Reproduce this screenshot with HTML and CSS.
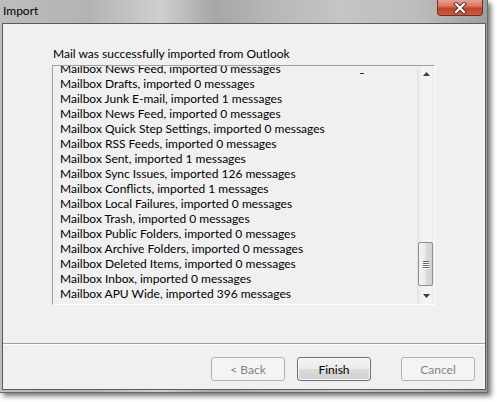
FILE: index.html
```html
<!DOCTYPE html>
<html>
<head>
<meta charset="utf-8">
<link rel="stylesheet" href="styles.css">
</head>
<body>
<div class="window">
  <div class="titlebar">
    <span class="title">Import</span>
    <div class="close">
      <svg width="16" height="12" viewBox="0 0 16 12">
        <path d="M4 2 L12 10 M12 2 L4 10" stroke="#4a3a38" stroke-width="4" stroke-linecap="square"/>
        <path d="M4 2 L12 10 M12 2 L4 10" stroke="#ffffff" stroke-width="2" stroke-linecap="square"/>
      </svg>
    </div>
  </div>
  <div class="client">
    <div class="content">
      <p class="heading">Mail was successfully imported from Outlook</p>
      <div class="listbox">
        <div class="viewport">
          <ul class="items">
            <li>Mailbox News Feed, imported 0 messages</li>
            <li>Mailbox Drafts, imported 0 messages</li>
            <li>Mailbox Junk E-mail, imported 1 messages</li>
            <li>Mailbox News Feed, imported 0 messages</li>
            <li>Mailbox Quick Step Settings, imported 0 messages</li>
            <li>Mailbox RSS Feeds, imported 0 messages</li>
            <li>Mailbox Sent, imported 1 messages</li>
            <li>Mailbox Sync Issues, imported 126 messages</li>
            <li>Mailbox Conflicts, imported 1 messages</li>
            <li>Mailbox Local Failures, imported 0 messages</li>
            <li>Mailbox Trash, imported 0 messages</li>
            <li>Mailbox Public Folders, imported 0 messages</li>
            <li>Mailbox Archive Folders, imported 0 messages</li>
            <li>Mailbox Deleted Items, imported 0 messages</li>
            <li>Mailbox Inbox, imported 0 messages</li>
            <li>Mailbox APU Wide, imported 396 messages</li>
          </ul>
          <span class="dash"></span>
        </div>
        <div class="scrollbar">
          <div class="arrow">
            <svg width="7" height="4" viewBox="0 0 7 4"><path d="M3.5 0 L7 4 L0 4 Z" fill="#3c3c3c"/></svg>
          </div>
          <div class="track">
            <div class="thumb">
              <div class="grip"><i></i><i></i><i></i><i></i></div>
            </div>
          </div>
          <div class="arrow">
            <svg width="7" height="4" viewBox="0 0 7 4"><path d="M0 0 L7 0 L3.5 4 Z" fill="#3c3c3c"/></svg>
          </div>
        </div>
      </div>
    </div>
    <div class="separator"></div>
    <div class="footer">
      <button class="btn disabled">&lt; Back</button>
      <button class="btn default">Finish</button>
      <button class="btn disabled cancel">Cancel</button>
    </div>
  </div>
</div>
</body>
</html>
```
FILE: styles.css
```css
html, body {
  margin: 0;
  padding: 0;
  background: #ffffff;
}
body {
  width: 497px;
  height: 402px;
  overflow: hidden;
  font-family: "Lato", "Liberation Sans", sans-serif;
  font-size: 12px;
  color: #000;
}
.window {
  width: 488px;
  height: 393px;
  display: flex;
  flex-direction: column;
  background: linear-gradient(90deg, #bdbdbd 0%, #b3b3b3 18%, #cfcfcf 33%, #a6a6a6 44%, #b6b6b6 55%, #c5c5c5 70%, #bcbcbc 86%, #9e9e9e 100%);
  box-shadow: 3px 3px 5px rgba(0,0,0,0.55);
  border-right: 1px solid #6a6a6a;
  border-bottom: 1px solid #6a6a6a;
  box-sizing: border-box;
}
.titlebar {
  height: 23px;
  display: flex;
  align-items: flex-start;
  justify-content: space-between;
  padding-left: 3px;
  padding-right: 4px;
  flex-shrink: 0;
}
.title {
  line-height: 15px;
  padding-top: 3px;
  color: #000;
}
.close {
  width: 46px;
  height: 16px;
  box-sizing: border-box;
  border: 1px solid #7a2e22;
  border-top: none;
  border-radius: 0 0 4px 4px;
  background: linear-gradient(180deg, #e9a293 0%, #d9765f 40%, #c2432b 55%, #cf5a3f 100%);
  display: flex;
  align-items: center;
  justify-content: center;
}
.client {
  margin-left: 2px;
  width: 484px;
  height: 367px;
  box-sizing: border-box;
  border: 1px solid #5c5c5c;
  background: #f0f0f0;
  display: flex;
  flex-direction: column;
}
.content {
  padding-left: 49px;
  padding-top: 22px;
}
.heading {
  margin: 0 0 4px 1px;
  line-height: 15px;
}
.listbox {
  width: 383px;
  height: 240px;
  box-sizing: border-box;
  border: 1px solid;
  border-color: #a0a0a0 #ffffff #ffffff #a0a0a0;
  display: flex;
}
.viewport {
  flex: 1;
  overflow: hidden;
  position: relative;
}
.items {
  list-style: none;
  margin: -5px 0 0 0;
  padding: 0 0 0 7px;
}
.items li {
  line-height: 15px;
  height: 15px;
  white-space: nowrap;
}
.dash {
  position: absolute;
  left: 307px;
  top: 7px;
  width: 4px;
  height: 1px;
  background: #333;
}
.scrollbar {
  width: 16px;
  display: flex;
  flex-direction: column;
  border-left: 1px solid #e2e2e2;
  background: linear-gradient(90deg, #e9e9e9 0%, #f3f3f3 30%, #f3f3f3 80%, #e9e9e9 100%);
}
.arrow {
  height: 16px;
  display: flex;
  align-items: center;
  justify-content: center;
}
.track {
  flex: 1;
  display: flex;
  flex-direction: column;
  justify-content: flex-end;
  padding-bottom: 2px;
}
.thumb {
  height: 44px;
  margin: 0 1px 0 0;
  box-sizing: border-box;
  border: 1px solid #8e8f8f;
  border-radius: 2px;
  background: linear-gradient(90deg, #f2f2f2 0%, #ebebeb 45%, #dcdcdc 55%, #cfcfcf 100%);
  display: flex;
  align-items: center;
  justify-content: center;
}
.grip {
  display: flex;
  flex-direction: column;
  gap: 1px;
}
.grip i {
  display: block;
  width: 6px;
  height: 1px;
  background: #6a6a6a;
  box-shadow: 0 1px 0 #ffffff;
}
.separator {
  margin-top: 38px;
  height: 1px;
  background: #a0a0a0;
  border-bottom: 1px solid #ffffff;
}
.footer {
  display: flex;
  justify-content: flex-end;
  padding-top: 12px;
  padding-right: 10px;
}
.btn {
  width: 74px;
  height: 24px;
  box-sizing: border-box;
  font-family: "Lato", "Liberation Sans", sans-serif;
  font-size: 12px;
  border-radius: 3px;
  padding: 0;
  margin-left: 12px;
}
.btn.disabled {
  border: 1px solid #adb2b5;
  background: #f4f4f4;
  color: #838383;
}
.btn.default {
  border: 1px solid #707070;
  color: #000;
  background: linear-gradient(180deg, #f4f4f4 0%, #ebebeb 48%, #dcdcdc 52%, #cfcfcf 100%);
  box-shadow: inset 0 0 0 1px #f8f8f8;
}
.btn.cancel {
  margin-left: 30px;
}
```
